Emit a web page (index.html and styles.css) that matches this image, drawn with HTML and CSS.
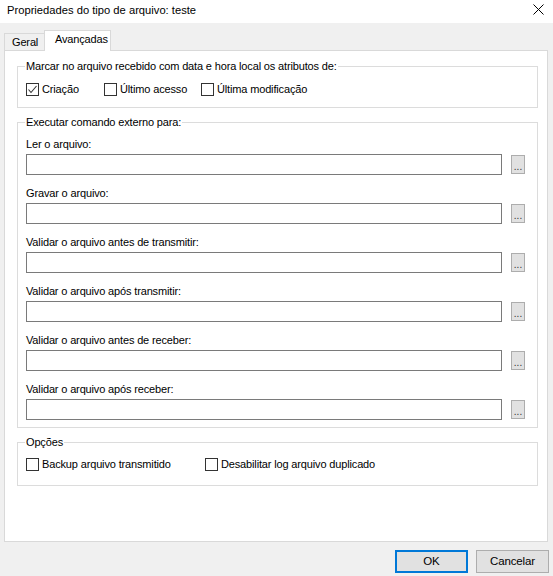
FILE: index.html
```html
<!DOCTYPE html>
<html>
<head>
<meta charset="utf-8">
<link rel="stylesheet" href="styles.css">
</head>
<body>
<div class="window">
  <div class="titlebar">
    <span class="title">Propriedades do tipo de arquivo: teste</span>
    <svg class="close" width="11" height="11" viewBox="0 0 11 11"><path d="M0.5 0.5 L10.5 10.5 M10.5 0.5 L0.5 10.5" stroke="#000" stroke-width="1" fill="none"/></svg>
  </div>
  <div class="tabs">
    <div class="tab t1">Geral</div>
    <div class="tab active">Avançadas</div>
  </div>
  <div class="panel">
    <fieldset class="group g1">
      <legend>Marcar no arquivo recebido com data e hora local os atributos de:</legend>
      <div class="checks">
        <label class="chk c1"><span class="box checked"><svg width="11" height="11" viewBox="0 0 11 11"><path d="M1.5 5.5 L4 8.5 L9.5 2" stroke="#333" stroke-width="1.1" fill="none"/></svg></span>Criação</label>
        <label class="chk c2"><span class="box"></span>Último acesso</label>
        <label class="chk c3"><span class="box"></span>Última modificação</label>
      </div>
    </fieldset>
    <fieldset class="group g2">
      <legend>Executar comando externo para:</legend>
      <div class="row"><div class="lbl">Ler o arquivo:</div><div class="line"><div class="input"></div><div class="browse">...</div></div></div>
      <div class="row"><div class="lbl">Gravar o arquivo:</div><div class="line"><div class="input"></div><div class="browse">...</div></div></div>
      <div class="row"><div class="lbl">Validar o arquivo antes de transmitir:</div><div class="line"><div class="input"></div><div class="browse">...</div></div></div>
      <div class="row"><div class="lbl">Validar o arquivo após transmitir:</div><div class="line"><div class="input"></div><div class="browse">...</div></div></div>
      <div class="row"><div class="lbl">Validar o arquivo antes de receber:</div><div class="line"><div class="input"></div><div class="browse">...</div></div></div>
      <div class="row last"><div class="lbl">Validar o arquivo após receber:</div><div class="line"><div class="input"></div><div class="browse">...</div></div></div>
    </fieldset>
    <fieldset class="group g3">
      <legend>Opções</legend>
      <div class="checks">
        <label class="chk o1"><span class="box"></span>Backup arquivo transmitido</label>
        <label class="chk o2"><span class="box"></span>Desabilitar log arquivo duplicado</label>
      </div>
    </fieldset>
  </div>
  <div class="buttons">
    <div class="btn ok">OK</div>
    <div class="btn">Cancelar</div>
  </div>
</div>
</body>
</html>
```
FILE: styles.css
```css
html, body {
  margin: 0;
  padding: 0;
}
body {
  background: #f0f0f0;
  font-family: "Liberation Sans", Arial, sans-serif;
  font-size: 11px;
  letter-spacing: -0.15px;
  color: #000;
}
.window {
  width: 553px;
  height: 576px;
  overflow: hidden;
}
.titlebar {
  height: 23px;
  background: #fff;
  display: flex;
  align-items: center;
  justify-content: space-between;
  padding: 0 9px 0 7px;
  box-sizing: border-box;
}
.title {
  font-size: 11.2px;
  letter-spacing: 0;
  margin-top: -4px;
}
.close {
  margin-top: -5px;
}
.tabs {
  display: flex;
  align-items: flex-end;
  padding-left: 4px;
  margin-top: 8px;
  height: 19px;
}
.tab {
  height: 16px;
  line-height: 17px;
  border: 1px solid #d9d9d9;
  border-bottom: none;
  background: #f0f0f0;
  box-sizing: content-box;
}
.tab.t1 {
  width: 32px;
  padding-left: 7px;
  border-right: none;
}
.tab.active {
  width: 55px;
  padding-left: 10px;
  height: 20px;
  line-height: 17px;
  background: #fff;
  margin-bottom: -1px;
  position: relative;
  z-index: 1;
}
.panel {
  margin: 0 5px 0 4px;
  background: #fff;
  border: 1px solid #d9d9d9;
  padding: 8px 9px 0 12px;
  box-sizing: border-box;
  height: 492px;
}
.group {
  border: 1px solid #dcdcdc;
  margin: 0;
  padding: 0 8px;
  min-width: 0;
}
.group legend {
  padding: 0 1px;
  margin-left: -1px;
  line-height: 14px;
}
.g1 {
  height: 49px;
  box-sizing: border-box;
}
.g1 .checks {
  padding-top: 9px;
}
.checks {
  display: flex;
  align-items: center;
  height: 14px;
}
.chk {
  display: flex;
  align-items: center;
  line-height: 14px;
}
.box {
  width: 11px;
  height: 11px;
  border: 1px solid #333;
  background: #fff;
  margin-right: 3px;
  display: flex;
  align-items: center;
  justify-content: center;
  flex: none;
}
.c1 { width: 78px; }
.c2 { width: 97px; }
.g2 {
  margin-top: 7px;
  padding-top: 8px;
  padding-bottom: 7px;
}
.row {
  display: flex;
  flex-direction: column;
  gap: 3px;
}
.row + .row {
  margin-top: 11px;
}
.lbl {
  line-height: 14px;
}
.line {
  display: flex;
  align-items: center;
}
.input {
  width: 474px;
  height: 19px;
  border: 1px solid #7a7a7a;
  background: #fff;
}
.browse {
  width: 12px;
  height: 17px;
  margin-left: 9px;
  border: 1px solid #adadad;
  background: #e1e1e1;
  font-size: 10px;
  line-height: 22px;
  text-align: center;
  overflow: hidden;
  color: #333;
  letter-spacing: 0;
}
.g3 {
  margin-top: 7px;
  height: 51px;
  box-sizing: border-box;
}
.g3 .checks {
  padding-top: 8px;
}
.o1 { width: 179px; }
.buttons {
  display: flex;
  justify-content: flex-end;
  gap: 8px;
  padding: 8px 4px 0 0;
}
.btn {
  width: 71px;
  height: 21px;
  border: 1px solid #adadad;
  background: #e1e1e1;
  text-align: center;
  line-height: 21px;
  font-size: 11.5px;
}
.btn.ok {
  border: 2px solid #0078d7;
  width: 69px;
  height: 19px;
  line-height: 19px;
}
```
